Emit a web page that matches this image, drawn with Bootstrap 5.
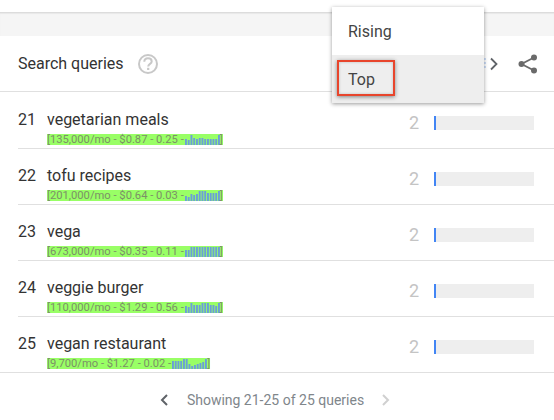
<!DOCTYPE html>
<html lang="en">
<head>
    <meta charset="UTF-8">
    <title>Search queries</title>
    <link href="https://cdn.jsdelivr.net/npm/bootstrap@5.3.0/dist/css/bootstrap.min.css" rel="stylesheet">
    <style>
        html, body { height: 420px; overflow: hidden; }
        body { position: relative; font-family: Roboto, sans-serif; color: #333; background: #fff; }
        .top-strip { height: 36px; padding-top: 12px; background: #fff; }
        .top-strip > div { height: 24px; background: #f5f5f5; border-top: 1px solid #dcdcdc; box-shadow: inset 0 1px 1px #e8e8e8; }
        .head-row { height: 56px; padding: 0 16px 0 18px; border-bottom: 1px solid #e0e0e0; }
        .head-title { font-size: 16px; color: #333; }
        .help-icon { margin-left: 13px; }
        .share-icon { margin-left: 20px; }
        #rows { padding-top: 1px; }
        .query-row { height: 56px; margin-left: 18px; padding-right: 20px; border-bottom: 1px solid #e0e0e0; }
        .query-row:last-child { margin-left: 0; padding-left: 18px; }
        .query-num { width: 29px; font-size: 16px; line-height: 20px; margin-top: 17px; }
        .query-name { font-size: 16px; line-height: 20px; margin-top: 17px; height: 20px; }
        .kw-meta { display: flex; width: fit-content; align-items: flex-end; height: 11px; margin-top: 4px; background: #9f6; color: #7c9068; font-size: 11.2px; line-height: 11px; white-space: nowrap; }
        .kw-meta svg { display: block; margin-left: 1px; }
        .query-val { width: 25px; font-size: 18px; color: #c4c4c4; line-height: 20px; margin-top: 20px; }
        .val-track { width: 100px; height: 14px; margin-top: 23px; background: #eee; }
        .val-track > div { height: 14px; background: #4285f4; }
        .pager { height: 54px; padding-right: 4px; font-size: 14px; color: #80868b; }
        .pager span { margin: 0 17px 0 18px; }
        .period-menu { position: absolute; left: 332px; top: 7px; width: 152px; background: #fff; box-shadow: 0 1px 4px rgba(0,0,0,.4); font-size: 16px; color: #444; }
        .period-menu > div { height: 48px; line-height: 50px; padding-left: 16px; }
        .period-menu .is-on { background: #eee; }
        .callout { position: absolute; left: 337px; top: 60px; width: 58px; height: 36px; border: 2px solid #e8452c; box-shadow: 0 1px 4px rgba(0,0,0,.45), inset 0 0 3px rgba(0,0,0,.2); }
    </style>
</head>
<body>
    <div class="top-strip"><div></div></div>

    <div class="head-row d-flex align-items-center">
        <span class="head-title">Search queries</span>
        <svg class="help-icon" width="22" height="22" viewBox="0 0 22 22">
            <circle cx="11" cy="11" r="9" fill="none" stroke="#c8c8c8" stroke-width="2"/>
            <path d="M7.300 8.800c0-2.200 1.600-3.500 3.700-3.500s3.700 1.300 3.700 3.100c0 2.400-3.500 2.500-3.500 5" fill="none" stroke="#c8c8c8" stroke-width="2"/>
            <rect x="10.100" y="14.800" width="2.200" height="2.200" fill="#c8c8c8"/>
        </svg>
        <svg class="ms-auto" width="14" height="14" viewBox="0 0 14 14">
            <path d="M1 1v2M1 5v2M1 9v2" stroke="#9bbcf0" stroke-width="1"/>
            <path d="m7 1.500 5.500 5.500L7 12.500" fill="none" stroke="#5f6368" stroke-width="1.800"/>
        </svg>
        <svg class="share-icon" width="20" height="20" viewBox="0 0 20 20" fill="#6a6a6a">
            <circle cx="16" cy="3.500" r="3"/><circle cx="3.500" cy="10" r="3"/><circle cx="16" cy="16.500" r="3"/>
            <path d="M16 3.500 3.500 10 16 16.500" fill="none" stroke="#6a6a6a" stroke-width="1.800"/>
        </svg>
    </div>

    <div id="rows"></div>

    <div class="pager d-flex align-items-center justify-content-center">
        <svg width="10" height="14" viewBox="0 0 10 14"><path d="M8 2 3 7l5 5" fill="none" stroke="#5f6368" stroke-width="2"/></svg>
        <span>Showing 21-25 of 25 queries</span>
        <svg width="10" height="14" viewBox="0 0 10 14"><path d="m2 2 5 5-5 5" fill="none" stroke="#d0d0d0" stroke-width="2"/></svg>
    </div>

    <div class="period-menu">
        <div>Rising</div>
        <div class="is-on">Top</div>
    </div>
    <div class="callout"></div>

    <script>
        const queries = [
            { num: 21, name: 'vegetarian meals', meta: '[135,000/mo - $0.87 - 0.25 -', bars: [6,5,10,7,6,7,7,6,6,6,6,6,10] },
            { num: 22, name: 'tofu recipes', meta: '[201,000/mo - $0.64 - 0.03 -', bars: [5,4,7,6,7,10,10,10,8,8,8,8,10] },
            { num: 23, name: 'vega', meta: '[673,000/mo - $0.35 - 0.11 -', bars: [7,7,10,10,10,10,10,10,10,10,10,10,10] },
            { num: 24, name: 'veggie burger', meta: '[110,000/mo - $1.29 - 0.56 -', bars: [7,6,10,8,8,8,10,10,10,8,8,7,10] },
            { num: 25, name: 'vegan restaurant', meta: '[9,700/mo - $1.27 - 0.02 -', bars: [8,8,8,8,10,10,5,3,4,5,6,7,10] }
        ];
        const rows = document.getElementById('rows');

        function sparkline(bars) {
            let rects = '';
            bars.forEach((h, i) => {
                rects += `<rect x="${i * 2.75}" y="${10 - h}" width="1.900" height="${h}" fill="#6a9fd8"/>`;
            });
            return `<svg width="35" height="10">${rects}</svg>`;
        }

        queries.forEach(q => {
            rows.innerHTML += `
                <div class="query-row d-flex">
                    <div class="query-num">${q.num}</div>
                    <div class="flex-grow-1">
                        <div class="query-name">${q.name}</div>
                        <div class="kw-meta">${q.meta}${sparkline(q.bars)}]</div>
                    </div>
                    <div class="query-val">2</div>
                    <div class="val-track"><div style="width: 2px"></div></div>
                </div>`;
        });
    </script>
    <script src="https://cdn.jsdelivr.net/npm/bootstrap@5.3.0/dist/js/bootstrap.bundle.min.js"></script>
</body>
</html>
